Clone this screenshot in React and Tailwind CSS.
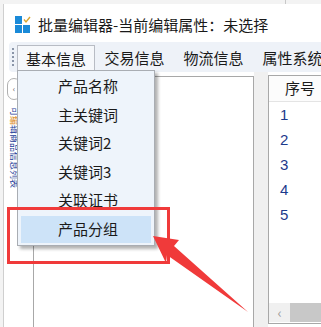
import React from "react";

const cjk = { fontFamily: '"Noto Sans CJK SC", "Noto Sans", sans-serif' };

const menuItems = ["产品名称", "主关键词", "关键词2", "关键词3", "关联证书", "产品分组"];
const rows = [1, 2, 3, 4, 5];

function AppIcon() {
  return (
    <svg width="16" height="17" viewBox="0 0 16 17">
      <rect x="0" y="0" width="7" height="8" fill="#1a8ad8" />
      <rect x="0" y="9" width="7" height="8" fill="#1a8ad8" />
      <rect x="8" y="9" width="7" height="8" fill="#1a8ad8" />
      <path d="M9 3.5 L11 6 L15 1" stroke="#d8a630" strokeWidth="1.4" fill="none" />
    </svg>
  );
}

function App() {
  return (
    <div className="relative w-[321px] h-[327px] overflow-hidden bg-[#f3f3f3] pt-[4px] pl-[3px]" style={cjk}>
      {/* window behind, top edge */}
      <div className="absolute left-[285px] top-0 h-[4px] w-[1px] bg-[#c8c8c8]" />

      <div className="flex flex-col h-full bg-white border-l border-[#cfcfcf]">
        {/* title bar */}
        <div className="flex items-center h-[36px] pl-[11px] pt-[4px] gap-[7px] shrink-0">
          <AppIcon />
          <span className="text-[15px] text-[#1a1a1a] whitespace-nowrap leading-none">批量编辑器-当前编辑属性：未选择</span>
        </div>

        {/* tool strip */}
        <div className="mt-[2px] ml-[5px] h-[30px] bg-[#eef2f8] rounded-l-[4px] flex items-end shrink-0 overflow-hidden">
          <div className="flex flex-col gap-[2px] self-center ml-[3px] mr-[3px] shrink-0">
            {[0, 1, 2, 3, 4].map((i) => (
              <div key={i} className="w-[2px] h-[2px] bg-[#8a95a8]" />
            ))}
          </div>
          <div className="h-[27px] w-[78px] shrink-0 border border-b-0 border-[#b8bcc4] bg-[#f6f8fb] flex items-center justify-center text-[15px] text-[#1a1a1a]">
            基本信息
          </div>
          {["交易信息", "物流信息", "属性系统"].map((t) => (
            <div key={t} className="h-[27px] w-[79px] flex items-center justify-center text-[15px] text-[#1a1a1a] whitespace-nowrap shrink-0">
              {t}
            </div>
          ))}
        </div>

        {/* content */}
        <div className="flex flex-1 min-h-0">
          {/* thin sidebar */}
          <div className="w-[29px] shrink-0 flex flex-col items-start pl-[3px] pt-[6px]">
            <div className="w-[14px] h-[22px] rounded-full border border-[#b0b0b0] flex items-center justify-center text-[8px] text-[#555]">
              ‹
            </div>
            <div
              className="mt-[7px] ml-[3px] text-[9px] leading-none text-[#1f3f9a] whitespace-nowrap"
              style={{ writingMode: "vertical-rl", textOrientation: "sideways" }}
            >
              可<span className="text-[#d9891a]">编</span>辑商品信息列表
            </div>
          </div>

          {/* left panel */}
          <div className="w-[221px] shrink-0 mt-[4px] border-l border-t border-r border-[#a8a8a8] bg-white" />

          {/* gap */}
          <div className="w-[14px] shrink-0 bg-[#f0f0f0]" />

          {/* right panel */}
          <div className="flex-1 mt-[3px] mb-[3px] border border-r-0 border-[#a8a8a8] bg-white flex flex-col">
            <div className="h-[26px] bg-[#fcfcfc] border-b border-[#e4e4e4] flex items-center pl-[16px] text-[15px] text-[#1a1a1a] shrink-0">
              序号
            </div>
            <div className="flex flex-col pt-[1px]">
              {rows.map((n) => (
                <div key={n} className="h-[25px] flex items-center pl-[11px] text-[15px] text-[#1c3a8c]" style={{ fontFamily: '"Liberation Sans", sans-serif' }}>
                  {n}
                </div>
              ))}
            </div>
            <div className="flex-1" />
            <div className="h-[19px] flex shrink-0 mb-[1px]">
              <div className="w-[21px] bg-[#f0f0f0] flex items-center justify-center text-[#9a9a9a] text-[14px]">‹</div>
              <div className="flex-1 bg-[#c8c8c8]" />
            </div>
          </div>
        </div>
      </div>

      {/* dropdown menu */}
      <div className="absolute left-[17px] top-[70px] w-[138px] bg-[#eef4fb] border border-[#a9adb3] py-[1px] px-[3px] shadow-[3px_3px_3px_rgba(0,0,0,0.3)]">
        {menuItems.map((t, i) => (
          <div key={t} className="h-[28.6px] flex items-center">
            <div
              className={`w-full h-[27px] flex items-center pl-[37px] text-[15px] text-[#1a1a1a] ${
                i === menuItems.length - 1 ? "bg-[#cde3f8]" : ""
              }`}
            >
              {t}
            </div>
          </div>
        ))}
      </div>

      {/* red highlight box */}
      <div className="absolute left-[7px] top-[207px] w-[163px] h-[57px] border-[3px] border-[#f03a3a]" />

      {/* red arrow */}
      <svg className="absolute left-0 top-0" width="321" height="327" viewBox="0 0 321 327">
        <polygon
          points="153,236 179,240 174,246 248,312 167,255 166,263"
          fill="#f03a3a"
        />
      </svg>
    </div>
  );
}

export default App;
